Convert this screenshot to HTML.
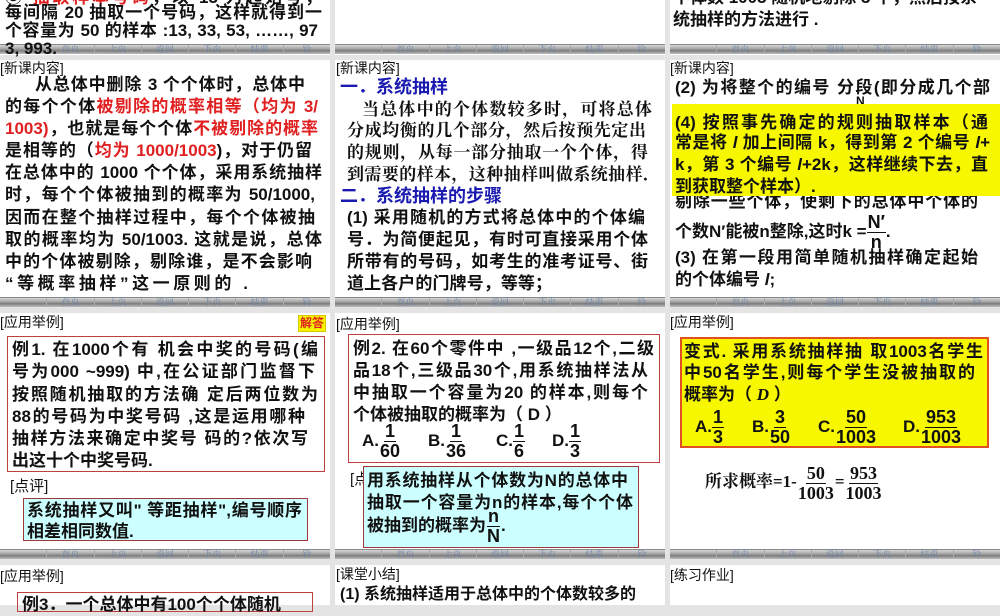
<!DOCTYPE html>
<html><head><meta charset="utf-8">
<style>
*{margin:0;padding:0;box-sizing:border-box}
body{width:1000px;height:600px;overflow:hidden;background:#e4e4e4;position:relative;font-family:"Liberation Sans","Noto Sans CJK SC",sans-serif;color:#111}
.s{position:absolute;background:#fff;overflow:hidden}
.t{position:absolute;white-space:nowrap;font-size:17px;font-weight:bold;line-height:22px;height:22px}
.j{text-align:justify;text-align-last:justify}
.h{position:absolute;white-space:nowrap;font-size:14px;line-height:16px;color:#111}
.r{color:#e02020}
.b{color:#1a1ab0}
.nav{position:absolute;height:10px;background:linear-gradient(#d8d8d8,#9a9a9a 50%,#7a7a7a 60%,#bdbdbd);display:flex;border-top:1px solid #888}
.nav span{flex:1;font:9px/9px "Liberation Serif","Noto Serif CJK SC",serif;color:#6f86a8;text-align:center;border-left:1px solid #aaa}
.nav span:first-child{border-left:none}
.box{position:absolute}
.fr{display:inline-flex;flex-direction:column;align-items:center;vertical-align:middle;line-height:19px;font-size:18px}
.fr i{font-style:normal;display:block;padding:0 1px}
.fr i:first-child{border-bottom:1.5px solid #111}
.serif{font-family:"Liberation Serif","Noto Serif CJK SC",serif}
</style></head><body>

<div class="s" style="left:0;top:0;width:330px;height:55px"></div>
<div class="s" style="left:335px;top:0;width:330px;height:55px"></div>
<div class="s" style="left:670px;top:0;width:330px;height:55px"></div>
<div class="s" style="left:0;top:60px;width:330px;height:247px"></div>
<div class="s" style="left:335px;top:60px;width:330px;height:247px"></div>
<div class="s" style="left:670px;top:60px;width:330px;height:247px"></div>
<div class="s" style="left:0;top:313px;width:330px;height:246px"></div>
<div class="s" style="left:335px;top:313px;width:330px;height:246px"></div>
<div class="s" style="left:670px;top:313px;width:330px;height:246px"></div>
<div class="s" style="left:0;top:565px;width:330px;height:40px"></div>
<div class="s" style="left:335px;top:565px;width:330px;height:40px"></div>
<div class="s" style="left:670px;top:565px;width:330px;height:40px"></div>

<div class="nav" style="left:0;top:44px;width:330px"><span></span><span>首页</span><span>上页</span><span>返回</span><span>下页</span><span>结束</span><span>铃</span></div>
<div class="nav" style="left:335px;top:44px;width:330px"><span></span><span>首页</span><span>上页</span><span>返回</span><span>下页</span><span>结束</span><span>铃</span></div>
<div class="nav" style="left:670px;top:44px;width:330px"><span></span><span>首页</span><span>上页</span><span>返回</span><span>下页</span><span>结束</span><span>铃</span></div>
<div class="nav" style="left:0;top:297px;width:330px"><span></span><span>首页</span><span>上页</span><span>返回</span><span>下页</span><span>结束</span><span>铃</span></div>
<div class="nav" style="left:335px;top:297px;width:330px"><span></span><span>首页</span><span>上页</span><span>返回</span><span>下页</span><span>结束</span><span>铃</span></div>
<div class="nav" style="left:670px;top:297px;width:330px"><span></span><span>首页</span><span>上页</span><span>返回</span><span>下页</span><span>结束</span><span>铃</span></div>
<div class="nav" style="left:0;top:549px;width:330px"><span></span><span>首页</span><span>上页</span><span>返回</span><span>下页</span><span>结束</span><span>铃</span></div>
<div class="nav" style="left:335px;top:549px;width:330px"><span></span><span>首页</span><span>上页</span><span>返回</span><span>下页</span><span>结束</span><span>铃</span></div>
<div class="nav" style="left:670px;top:549px;width:330px"><span></span><span>首页</span><span>上页</span><span>返回</span><span>下页</span><span>结束</span><span>铃</span></div>

<div class="t j" style="left:5px;top:-13px;width:317px">③ <span class="r">抽取样本号码</span>，以 13 为起始号，</div>
<div class="t j" style="left:5px;top:2px;width:317px">每间隔 20 抽取一个号码，这样就得到一</div>
<div class="t j" style="left:5px;top:20px;width:313px">个容量为 50 的样本 :13, 33, 53, ……, 97</div>
<div class="t" style="left:5px;top:38px">3, 993.</div>
<div class="t j" style="left:673px;top:-13px;width:302px">个体数 1003 随机地剔除 3 个，然后按系</div>
<div class="t" style="left:673px;top:9px">统抽样的方法进行 .</div>

<div class="h" style="left:0;top:60px">[新课内容]</div>
<div class="t j" style="left:35px;top:74px;width:270px">从总体中删除 3 个个体时，总体中</div>
<div class="t j" style="left:5px;top:96px;width:313px">的每个个体<span class="r">被剔除的概率相等（均为 3/</span></div>
<div class="t j" style="left:5px;top:118px;width:313px"><span class="r">1003)</span>，也就是每个个体<span class="r">不被剔除的概率</span></div>
<div class="t j" style="left:5px;top:140px;width:307px">是相等的（<span class="r">均为 1000/1003</span>)，对于仍留</div>
<div class="t j" style="left:5px;top:162px;width:317px">在总体中的 1000 个个体，采用系统抽样</div>
<div class="t j" style="left:5px;top:184px;width:310px">时，每个个体被抽到的概率为 50/1000,</div>
<div class="t j" style="left:5px;top:207px;width:310px">因而在整个抽样过程中，每个个体被抽</div>
<div class="t j" style="left:5px;top:229px;width:317px">取的概率均为 50/1003. 这就是说，总体</div>
<div class="t j" style="left:5px;top:251px;width:307px">中的个体被剔除，剔除谁，是不会影响</div>
<div class="t j" style="left:5px;top:273px;width:243px">“等概率抽样”这一原则的 .</div>

<div class="h" style="left:336px;top:60px">[新课内容]</div>
<div class="t b" style="left:340px;top:76px;font-size:18px">一．系统抽样</div>
<div class="t j serif" style="left:362px;top:99px;width:290px">当总体中的个体数较多时，可将总体</div>
<div class="t j serif" style="left:347px;top:120px;width:299px">分成均衡的几个部分，然后按预先定出</div>
<div class="t j serif" style="left:347px;top:142px;width:301px">的规则，从每一部分抽取一个个体，得</div>
<div class="t j serif" style="left:347px;top:164px;width:313px">到需要的样本，这种抽样叫做系统抽样．</div>
<div class="t b" style="left:340px;top:185px;font-size:18px">二．系统抽样的步骤</div>
<div class="t j" style="left:347px;top:207px;width:298px">(1) 采用随机的方式将总体中的个体编</div>
<div class="t j" style="left:347px;top:229px;width:301px">号．为简便起见，有时可直接采用个体</div>
<div class="t j" style="left:347px;top:251px;width:301px">所带有的号码，如考生的准考证号、街</div>
<div class="t j" style="left:347px;top:273px;width:205px">道上各户的门牌号，等等；</div>

<div class="h" style="left:670px;top:60px">[新课内容]</div>
<div class="t j" style="left:675px;top:77px;width:315px">(2) 为将整个的编号 分段(即分成几个部</div>
<div class="t" style="left:856px;top:90px;font-size:12px">N</div>
<div class="t j" style="left:675px;top:191px;width:303px">剔除一些个体，使剩下的总体中个体的</div>
<div class="box" style="left:672px;top:104px;width:328px;height:92px;background:#f7f700"></div>
<div class="t j" style="left:675px;top:112px;width:313px">(4) 按照事先确定的规则抽取样本（通</div>
<div class="t j" style="left:675px;top:132px;width:315px">常是将 <i>l</i> 加上间隔 k，得到第 2 个编号 <i>l</i>+</div>
<div class="t j" style="left:675px;top:154px;width:313px">k，第 3 个编号 <i>l</i>+2k，这样继续下去，直</div>
<div class="t" style="left:675px;top:176px">到获取整个样本）.</div>
<div class="t" style="left:675px;top:213px;height:34px;line-height:32px">个数N′能被n整除,这时k =<span class="fr"><i>N′</i><i>n</i></span>.</div>
<div class="t j" style="left:675px;top:247px;width:303px">(3) 在第一段用简单随机抽样确定起始</div>
<div class="t" style="left:675px;top:269px">的个体编号 <i>l</i>;</div>

<div class="h" style="left:0;top:314px">[应用举例]</div>
<div class="box" style="left:298px;top:315px;width:28px;height:17px;background:#f5f500;border:1px solid #d8c800;color:#e02020;font-size:12px;line-height:15px;text-align:center;font-weight:bold">解答</div>
<div class="box" style="left:7px;top:336px;width:318px;height:136px;border:1px solid #c04040"></div>
<div class="t j" style="left:12px;top:339px;width:306px">例1. 在1000个有 机会中奖的号码(编</div>
<div class="t j" style="left:12px;top:361px;width:303px">号为000 ~999) 中,在公证部门监督下</div>
<div class="t j" style="left:12px;top:384px;width:306px">按照随机抽取的方法确 定后两位数为</div>
<div class="t j" style="left:12px;top:406px;width:293px">88的号码为中奖号码 ,这是运用哪种</div>
<div class="t j" style="left:12px;top:428px;width:296px">抽样方法来确定中奖号 码的?依次写</div>
<div class="t" style="left:12px;top:450px">出这十个中奖号码.</div>
<div class="h" style="left:10px;top:479px;font-size:15px">[点评]</div>
<div class="box" style="left:23px;top:498px;width:285px;height:43px;background:#ccffff;border:1px solid #a03838"></div>
<div class="t j" style="left:27px;top:500px;width:275px">系统抽样又叫" 等距抽样",编号顺序</div>
<div class="t" style="left:27px;top:521px">相差相同数值.</div>

<div class="h" style="left:336px;top:316px">[应用举例]</div>
<div class="box" style="left:348px;top:334px;width:312px;height:129px;border:1px solid #c04040"></div>
<div class="t j" style="left:353px;top:338px;width:301px">例2. 在60个零件中 ,一级品12个,二级</div>
<div class="t j" style="left:353px;top:360px;width:295px">品18个,三级品30个,用系统抽样法从</div>
<div class="t j" style="left:353px;top:382px;width:295px">中抽取一个容量为20 的样本,则每个</div>
<div class="t" style="left:353px;top:404px">个体被抽取的概率为（ D ）</div>
<div class="t" style="left:362px;top:421px;height:40px;line-height:40px">A.<span class="fr"><i>1</i><i>60</i></span></div>
<div class="t" style="left:428px;top:421px;height:40px;line-height:40px">B.<span class="fr"><i>1</i><i>36</i></span></div>
<div class="t" style="left:496px;top:421px;height:40px;line-height:40px">C.<span class="fr"><i>1</i><i>6</i></span></div>
<div class="t" style="left:552px;top:421px;height:40px;line-height:40px">D.<span class="fr"><i>1</i><i>3</i></span></div>
<div class="h" style="left:350px;top:472px;font-size:15px">[点</div>
<div class="box" style="left:363px;top:466px;width:276px;height:82px;background:#ccffff;border:1px solid #a03838"></div>
<div class="t j" style="left:367px;top:470px;width:261px">用系统抽样从个体数为N的总体中</div>
<div class="t j" style="left:367px;top:492px;width:266px">抽取一个容量为n的样本,每个个体</div>
<div class="t" style="left:367px;top:506px;height:40px;line-height:40px">被抽到的概率为<span class="fr"><i>n</i><i>N</i></span>.</div>

<div class="h" style="left:670px;top:314px">[应用举例]</div>
<div class="box" style="left:680px;top:337px;width:309px;height:111px;background:#f7f700;border:2px solid #e05020"></div>
<div class="t j" style="left:684px;top:341px;width:299px">变式. 采用系统抽样抽 取1003名学生</div>
<div class="t j" style="left:684px;top:362px;width:291px">中50名学生,则每个学生没被抽取的</div>
<div class="t" style="left:684px;top:384px">概率为（ <i class="serif">D</i> ）</div>
<div class="t" style="left:695px;top:407px;height:40px;line-height:40px">A.<span class="fr"><i>1</i><i>3</i></span></div>
<div class="t" style="left:752px;top:407px;height:40px;line-height:40px">B.<span class="fr"><i>3</i><i>50</i></span></div>
<div class="t" style="left:818px;top:407px;height:40px;line-height:40px">C.<span class="fr"><i>50</i><i>1003</i></span></div>
<div class="t" style="left:903px;top:407px;height:40px;line-height:40px">D.<span class="fr"><i>953</i><i>1003</i></span></div>
<div class="t serif" style="left:705px;top:462px;height:40px;line-height:40px">所求概率=1-<span class="fr"><i>50</i><i>1003</i></span>=<span class="fr"><i>953</i><i>1003</i></span></div>

<div class="h" style="left:0;top:568px">[应用举例]</div>
<div class="box" style="left:17px;top:592px;width:296px;height:20px;border:1px solid #c04040"></div>
<div class="t" style="left:22px;top:594px">例3．一个总体中有100个个体随机</div>
<div class="h" style="left:336px;top:566px">[课堂小结]</div>
<div class="t" style="left:340px;top:584px;font-size:16px">(1) 系统抽样适用于总体中的个体数较多的</div>
<div class="h" style="left:670px;top:567px">[练习作业]</div>
</body></html>
